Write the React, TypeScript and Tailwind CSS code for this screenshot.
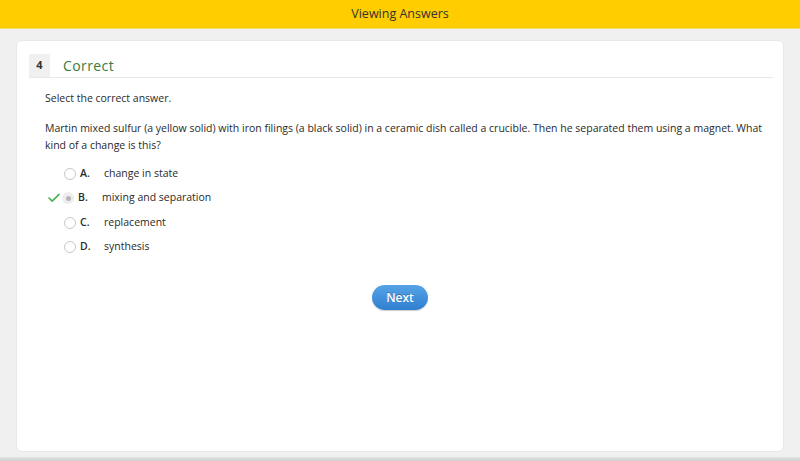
const options = [
  { letter: "A.", text: "change in state", selected: false },
  { letter: "B.", text: "mixing and separation", selected: true },
  { letter: "C.", text: "replacement", selected: false },
  { letter: "D.", text: "synthesis", selected: false },
];

export default function App() {
  return (
    <div
      className="h-[461px] w-[800px] bg-[#f0f0f0] flex flex-col overflow-hidden text-[#2a2a2a]"
      style={{ fontFamily: '"Open Sans", "Noto Sans", sans-serif' }}
    >
      {/* Header */}
      <header className="h-[29px] shrink-0 bg-[#ffcd00] border-b border-[#f5dc6a] flex items-center justify-center">
        <span className="text-[12.5px] text-[#333]">Viewing Answers</span>
      </header>

      {/* Card */}
      <div className="flex-1 px-4 pt-[11px] pb-[5px]">
        <div className="h-full bg-white rounded-md border border-[#e8e8e8] px-3 pt-[13px]">
          <div className="flex items-center h-[24px] border-b border-[#e8e8e8] mr-[-2px]">
            <div className="w-[21px] h-full bg-[#f0f0f0] flex items-center justify-center text-[11px] font-bold text-[#333]">
              4
            </div>
            <span className="ml-[13px] text-[14px] tracking-[0.4px] text-[#3c7a3f]">Correct</span>
          </div>

          <div className="pl-[16px] text-[10.5px]">
            <p className="mt-[12px] leading-[17px]">Select the correct answer.</p>
            <p className="mt-[13px] leading-[17px]">
              Martin mixed sulfur (a yellow solid) with iron filings (a black solid) in a ceramic dish called a
              crucible. Then he separated them using a magnet. What kind of a change is this?
            </p>

            <div className="mt-[11px] flex flex-col gap-[7px]">
              {options.map((o) => (
                <div
                  key={o.letter}
                  className={o.selected ? "flex items-center h-[17.5px] -ml-[2px]" : "flex items-center h-[17.5px]"}
                >
                  <div className="w-[19px] flex items-center">
                    {o.selected && (
                      <svg className="w-[12px] h-[10px] ml-[5px]" viewBox="0 0 13 11" fill="none">
                        <path d="M1 5.5l3.5 3.5L12 1.5" stroke="#4caf50" strokeWidth={1.8} strokeLinecap="round" strokeLinejoin="round" />
                      </svg>
                    )}
                  </div>
                  <div
                    className={
                      o.selected
                        ? "w-[12px] h-[12px] rounded-full bg-[#ededed] flex items-center justify-center"
                        : "w-[12px] h-[12px] rounded-full border border-[#c8c8c8] bg-white"
                    }
                  >
                    {o.selected && <div className="w-[5px] h-[5px] rounded-full bg-[#b5b5b5]" />}
                  </div>
                  <span className="ml-[4px] font-semibold w-[24px]">{o.letter}</span>
                  <span>{o.text}</span>
                </div>
              ))}
            </div>
          </div>

          <div className="flex justify-center mt-[29px]">
            <button className="h-[25px] w-[56px] rounded-full bg-gradient-to-b from-[#56a3e6] to-[#2f7fd0] text-white text-[12px] font-semibold shadow-[0_1px_1px_rgba(0,0,0,0.2)] [text-shadow:0_-1px_0_rgba(0,0,0,0.25)]">
              Next
            </button>
          </div>
        </div>
      </div>
      <div className="h-[4px] shrink-0 bg-gradient-to-b from-[#e4e4e4] to-[#cfcfcf]" />
    </div>
  );
}
